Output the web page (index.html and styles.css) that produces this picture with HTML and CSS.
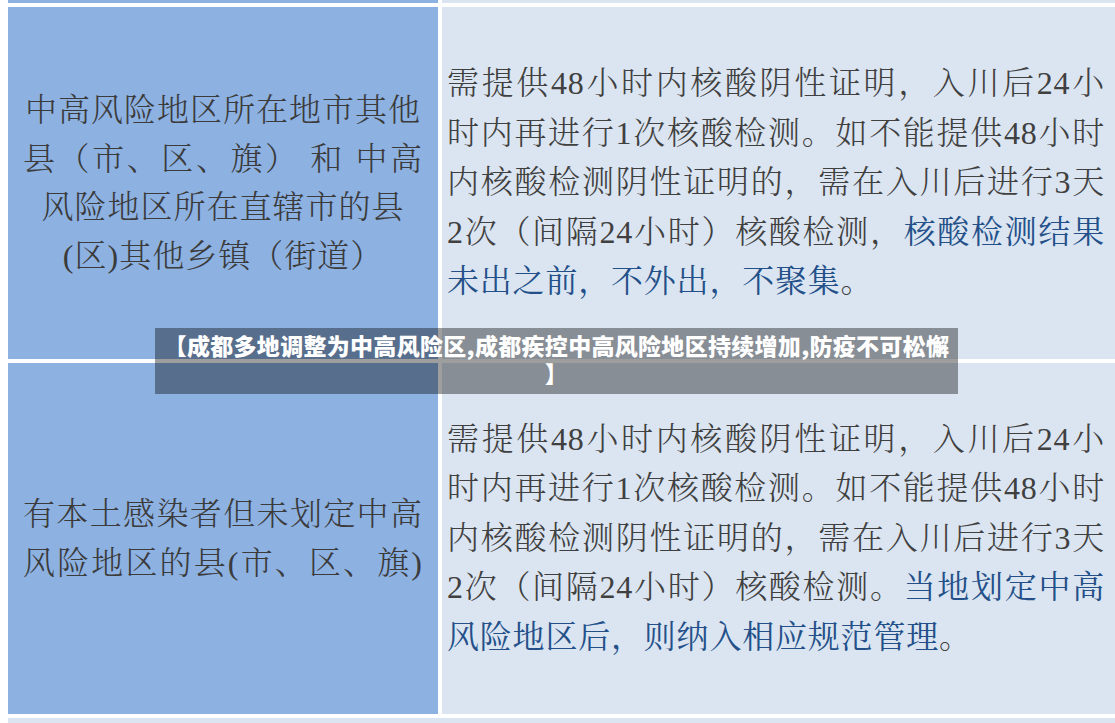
FILE: index.html
```html
<!DOCTYPE html>
<html lang="zh-CN">
<head>
<meta charset="utf-8">
<title>成都中高风险地区</title>
<link rel="stylesheet" href="styles.css">
</head>
<body>
<div class="table">
  <div class="cell left sliver"></div>
  <div class="cell right sliver"></div>

  <div class="cell left">
    <div class="ltext">
      <div class="line">中高风险地区所在地市其他</div>
      <div class="line just">县（市、区、旗） 和 中高</div>
      <div class="line">风险地区所在直辖市的县</div>
      <div class="line">(区)其他乡镇（街道）</div>
    </div>
  </div>
  <div class="cell right">
    <div class="rtext">
      <div class="line just">需提供48小时内核酸阴性证明，入川后24小</div>
      <div class="line just">时内再进行1次核酸检测。如不能提供48小时</div>
      <div class="line just">内核酸检测阴性证明的，需在入川后进行3天</div>
      <div class="line just">2次（间隔24小时）核酸检测，<span class="blue">核酸检测结果</span></div>
      <div class="line"><span class="blue">未出之前，不外出，不聚集</span>。</div>
    </div>
  </div>

  <div class="cell left">
    <div class="ltext">
      <div class="line just">有本土感染者但未划定中高</div>
      <div class="line just">风险地区的县(市、区、旗)</div>
    </div>
  </div>
  <div class="cell right">
    <div class="rtext">
      <div class="line just">需提供48小时内核酸阴性证明，入川后24小</div>
      <div class="line just">时内再进行1次核酸检测。如不能提供48小时</div>
      <div class="line just">内核酸检测阴性证明的，需在入川后进行3天</div>
      <div class="line just">2次（间隔24小时）核酸检测。<span class="blue">当地划定中高</span></div>
      <div class="line"><span class="blue">风险地区后，则纳入相应规范管理</span>。</div>
    </div>
  </div>

  <div class="cell bottom"></div>
</div>

<div class="caption">【成都多地调整为中高风险区,成都疾控中高风险地区持续增加,防疫不可松懈<br>】</div>
</body>
</html>
```
FILE: styles.css
```css
html, body {
  margin: 0;
  padding: 0;
  background: #ffffff;
  overflow: hidden;
}

body {
  width: 1115px;
  height: 723px;
  position: relative;
  font-family: "Liberation Serif", "Noto Serif CJK SC", "Noto Sans CJK SC", serif;
}

.table {
  display: grid;
  grid-template-columns: 430px 673px;
  grid-template-rows: 3px 352px 351px 40px;
  column-gap: 4px;
  row-gap: 4px;
  padding-left: 8px;
}

.cell {
  display: flex;
  align-items: center;
}

.left {
  background: #8db2e2;
  justify-content: center;
}

.right {
  background: #dbe5f1;
  padding: 0 10px 0 5px;
}

.bottom {
  grid-column: 1 / -1;
  background: #dbe5f1;
}

.ltext {
  width: 400px;
  color: #3b3b3c;
  font-size: 32px;
  line-height: 48.5px;
  letter-spacing: 1px;
  text-align: center;
  font-weight: 300;
}

.rtext {
  width: 658px;
  color: #404040;
  font-size: 32px;
  line-height: 49.5px;
  letter-spacing: 0.8px;
  font-weight: 300;
}

.line {
  white-space: nowrap;
}

.line.just {
  text-align: justify;
  text-align-last: justify;
  white-space: normal;
}

.blue {
  color: #245089;
  font-weight: 400;
}

.caption {
  position: absolute;
  left: 155px;
  top: 328px;
  width: 787px;
  height: 56px;
  padding: 3px 8px 7px;
  background: rgba(0, 0, 0, 0.38);
  color: #ffffff;
  font-family: "Noto Sans CJK SC", sans-serif;
  font-weight: 900;
  font-size: 23px;
  line-height: 28px;
  letter-spacing: 0.3px;
  text-align: center;
  white-space: nowrap;
}
```
